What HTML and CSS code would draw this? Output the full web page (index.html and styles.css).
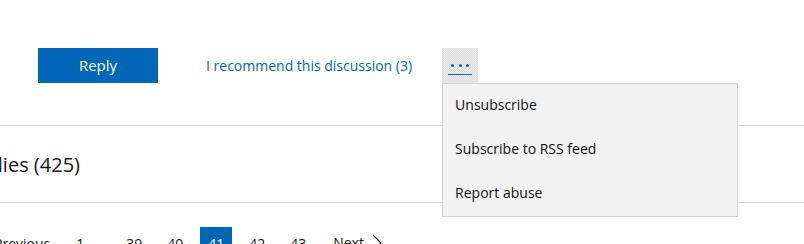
FILE: index.html
```html
<!DOCTYPE html>
<html lang="en">
<head>
<meta charset="utf-8">
<title>Discussion</title>
<link rel="stylesheet" href="styles.css">
</head>
<body>
<div class="page">
  <div class="actions">
    <button class="reply-btn">Reply</button>
    <a class="recommend" href="#">I recommend this discussion (3)</a>
    <div class="more-wrap">
      <button class="more-btn" aria-label="More options">
        <span class="dots"><i></i><i></i><i></i></span>
      </button>
      <ul class="menu">
        <li>Unsubscribe</li>
        <li>Subscribe to RSS feed</li>
        <li>Report abuse</li>
      </ul>
    </div>
  </div>
  <div class="replies-head">
    <h2 class="replies-title">Replies (425)</h2>
  </div>
  <nav class="pager">
    <span class="pg prev">Previous</span>
    <span class="pg num first">1</span>
    <span class="pg num">39</span>
    <span class="pg num">40</span>
    <span class="pg num current">41</span>
    <span class="pg num">42</span>
    <span class="pg num">43</span>
    <span class="pg next">Next <svg class="chev" width="10" height="18" viewBox="0 0 10 18"><path d="M1 1 L9 9 L1 17" fill="none" stroke="#222" stroke-width="1.2"/></svg></span>
  </nav>
</div>
</body>
</html>
```
FILE: styles.css
```css
html, body {
  margin: 0;
  padding: 0;
  background: #fff;
  overflow: hidden;
}
body {
  font-family: "Open Sans", "Noto Sans", "Liberation Sans", sans-serif;
  font-size: 14px;
  color: #171717;
}
.page {
  width: 804px;
}
.actions {
  display: flex;
  align-items: center;
  padding: 48px 0 0 38px;
  height: 35px;
}
.reply-btn {
  width: 120px;
  height: 35px;
  border: 0;
  background: #0067b8;
  color: #fff;
  font-family: inherit;
  font-size: 15px;
  padding: 0 0 2px;
  cursor: pointer;
}
.recommend {
  margin-left: 48px;
  color: #0067b8;
  text-decoration: none;
  font-size: 14px;
}
.more-wrap {
  position: relative;
  margin-left: 30px;
  align-self: flex-start;
}
.more-btn {
  display: block;
  width: 36px;
  height: 35px;
  border: 0;
  padding: 0;
  background: repeating-conic-gradient(#dcdcdc 0 25%, #ececec 0 50%) 0 0 / 2px 2px;
  position: relative;
}
.dots {
  position: absolute;
  left: 6px;
  top: 16px;
  width: 24px;
  height: 11px;
  display: flex;
  justify-content: space-between;
  padding: 0 3px;
  box-sizing: border-box;
  border-bottom: 1px solid #0067b8;
}
.dots i {
  display: block;
  width: 3px;
  height: 3px;
  background: #0067b8;
  border-radius: 50%;
}
.menu {
  position: absolute;
  left: 0;
  top: 35px;
  width: 294px;
  margin: 0;
  padding: 0;
  list-style: none;
  background: #f2f2f2;
  border: 1px solid #d4d4d4;
  z-index: 5;
}
.menu li {
  padding: 11px 12px 13px;
  line-height: 20px;
  font-size: 14px;
  color: #111;
}
.replies-head {
  margin-top: 42px;
  border-top: 1px solid #dadada;
  border-bottom: 1px solid #dadada;
  height: 76px;
  display: flex;
  align-items: center;
}
.replies-title {
  margin: 0 0 0 -38px;
  font-weight: 400;
  font-size: 20px;
  color: #171717;
}
.pager {
  display: flex;
  align-items: center;
  margin: 24px 0 0 -6px;
  gap: 9px;
}
.pg {
  height: 32px;
  line-height: 34px;
  font-size: 14px;
}
.prev {
  padding-right: 5px;
}
.num {
  width: 32px;
  text-align: center;
}
.num.first {
  margin-right: 13px;
}
.current {
  background: #0067b8;
  color: #fff;
}
.next {
  padding-left: 10px;
  display: flex;
  align-items: center;
  gap: 8px;
}
.chev {
  display: block;
}
```
